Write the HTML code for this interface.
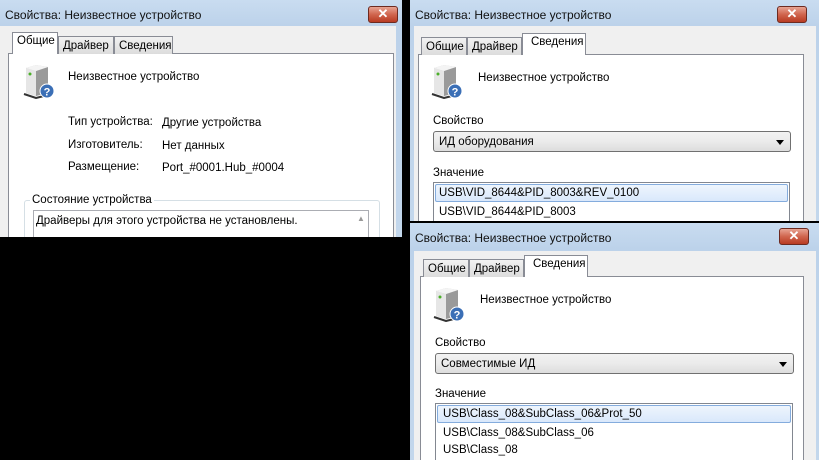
<!DOCTYPE html>
<html><head><meta charset="utf-8"><style>
*{margin:0;padding:0;box-sizing:border-box}
body{width:819px;height:460px;background:#000;position:relative;overflow:hidden;font-family:"Liberation Sans","Noto Sans CJK SC",sans-serif;font-size:11.5px;color:#000}
.win{position:absolute;background:linear-gradient(#c9dcf0,#bcd2ea 26px,#c3d7ec);overflow:hidden}
.title{position:absolute;left:5px;top:8px;font-size:12px;color:#111}
.close{position:absolute;width:30px;height:17px;border:1px solid #6d2a20;border-radius:3px;background:linear-gradient(#e8a493,#d0654e 50%,#b83b22);color:#fff;font-weight:bold;font-size:13px;text-align:center;line-height:14px}
.body{position:absolute;background:#f0f0f0}
.panel{position:absolute;background:#fff;border:1px solid #898c95}
.tab{position:absolute;border:1px solid #898c95;border-bottom:none;background:linear-gradient(#f2f2f2,#dcdcdc);padding:3px 4px 0;height:18px;font-size:11.5px}
.tab.sel{background:#fff;height:22px;padding-top:2px;z-index:2}
.t{position:absolute;white-space:nowrap}
.combo{position:absolute;border:1px solid #707070;border-radius:3px;background:linear-gradient(#f2f2f2,#ebebeb 50%,#dddddd);padding:4px 5px;height:21px}
.combo:after{content:"";position:absolute;right:6px;top:8px;border:4px solid transparent;border-top:5px solid #000}
.list{position:absolute;border:1px solid #828790;background:#fff}
.selrow{position:absolute;border:1px solid #84acdd;border-radius:2px;background:linear-gradient(#eef5fd,#d9e8fb);}
</style></head><body>

<svg width="0" height="0" style="position:absolute"><defs>
<g id="ic">
<path d="M4 3 L14 0 L26 2 L26 28 L14 31 L4 28Z" fill="#c9c9c9"/>
<path d="M4 3 L14 6 L14 31 L4 28Z" fill="#e6e6e6"/>
<path d="M14 6 L26 2 L26 28 L14 31Z" fill="#9a9a9a"/>
<path d="M4 3 L14 0 L26 2 L14 6Z" fill="#f4f4f4"/>
<circle cx="8" cy="9" r="1.5" fill="#4caf2a"/>
<path d="M2 29 L14 33 L26 30" stroke="#333" stroke-width="2" fill="none"/>
<circle cx="25" cy="26" r="7" fill="#3b6fb6" stroke="#fff" stroke-width="1"/>
<text x="25" y="30.5" font-size="11" font-weight="bold" fill="#fff" text-anchor="middle" font-family="Liberation Sans">?</text>
</g></defs></svg>

<!-- Window 1 -->
<div class="win" style="left:0;top:0;width:402px;height:237px">
<div class="title">Свойства: Неизвестное устройство</div>
<div class="close" style="left:368px;top:6px">✕</div>
<div class="body" style="left:0;top:26px;width:396px;height:215px"></div>
<div class="panel" style="left:8px;top:53px;width:386px;height:200px"></div>
<div class="tab sel" style="left:12px;top:32px;width:46px">Общие</div>
<div class="tab" style="left:58px;top:36px;width:56px">Драйвер</div>
<div class="tab" style="left:114px;top:36px;width:59px">Сведения</div>
<svg style="position:absolute;left:22px;top:65px" width="34" height="34"><use href="#ic"/></svg>
<div class="t" style="left:68px;top:71px">Неизвестное устройство</div>
<div class="t" style="left:68px;top:116px">Тип устройства:</div>
<div class="t" style="left:162px;top:117px">Другие устройства</div>
<div class="t" style="left:68px;top:139px">Изготовитель:</div>
<div class="t" style="left:162px;top:140px">Нет данных</div>
<div class="t" style="left:68px;top:161px">Размещение:</div>
<div class="t" style="left:162px;top:162px">Port_#0001.Hub_#0004</div>
<div style="position:absolute;left:24px;top:200px;width:356px;height:50px;border:1px solid #d5dfe5;border-radius:3px"></div>
<div class="t" style="left:30px;top:194px;background:#fff;padding:0 2px">Состояние устройства</div>
<div style="position:absolute;left:33px;top:210px;width:336px;height:40px;border:1px solid #abadb3;background:#fff"></div>
<div class="t" style="left:36px;top:215px">Драйверы для этого устройства не установлены.</div>
<div class="t" style="left:357px;top:214px;font-size:8px;color:#999">▲</div>
</div>

<!-- Window 2 -->
<div class="win" style="left:410px;top:0;width:409px;height:221px">
<div class="title">Свойства: Неизвестное устройство</div>
<div class="close" style="left:367px;top:6px">✕</div>
<div class="body" style="left:4px;top:26px;width:402px;height:200px"></div>
<div class="panel" style="left:8px;top:54px;width:386px;height:180px"></div>
<div class="tab" style="left:11px;top:37px;width:46px">Общие</div>
<div class="tab" style="left:57px;top:37px;width:55px">Драйвер</div>
<div class="tab sel" style="left:112px;top:33px;width:64px;padding-left:8px">Сведения</div>
<svg style="position:absolute;left:20px;top:65px" width="34" height="34"><use href="#ic"/></svg>
<div class="t" style="left:68px;top:72px">Неизвестное устройство</div>
<div class="t" style="left:23px;top:115px">Свойство</div>
<div class="combo" style="left:23px;top:131px;width:358px">ИД оборудования</div>
<div class="t" style="left:23px;top:167px">Значение</div>
<div class="list" style="left:23px;top:182px;width:357px;height:50px"></div>
<div class="selrow" style="left:25px;top:184px;width:353px;height:18px"></div>
<div class="t" style="left:29px;top:187px">USB\VID_8644&amp;PID_8003&amp;REV_0100</div>
<div class="t" style="left:29px;top:206px">USB\VID_8644&amp;PID_8003</div>
</div>

<!-- Window 3 -->
<div class="win" style="left:410px;top:223px;width:409px;height:237px">
<div class="title" style="top:8px">Свойства: Неизвестное устройство</div>
<div class="close" style="left:369px;top:5px">✕</div>
<div class="body" style="left:4px;top:28px;width:402px;height:215px"></div>
<div class="panel" style="left:10px;top:53px;width:384px;height:200px"></div>
<div class="tab" style="left:13px;top:36px;width:46px">Общие</div>
<div class="tab" style="left:59px;top:36px;width:55px">Драйвер</div>
<div class="tab sel" style="left:114px;top:32px;width:64px;padding-left:8px">Сведения</div>
<svg style="position:absolute;left:22px;top:65px" width="34" height="34"><use href="#ic"/></svg>
<div class="t" style="left:70px;top:71px">Неизвестное устройство</div>
<div class="t" style="left:25px;top:114px">Свойство</div>
<div class="combo" style="left:25px;top:130px;width:359px">Совместимые ИД</div>
<div class="t" style="left:25px;top:165px">Значение</div>
<div class="list" style="left:25px;top:180px;width:358px;height:60px"></div>
<div class="selrow" style="left:27px;top:182px;width:354px;height:18px"></div>
<div class="t" style="left:33px;top:185px">USB\Class_08&amp;SubClass_06&amp;Prot_50</div>
<div class="t" style="left:33px;top:204px">USB\Class_08&amp;SubClass_06</div>
<div class="t" style="left:33px;top:221px">USB\Class_08</div>
</div>
</body></html>
